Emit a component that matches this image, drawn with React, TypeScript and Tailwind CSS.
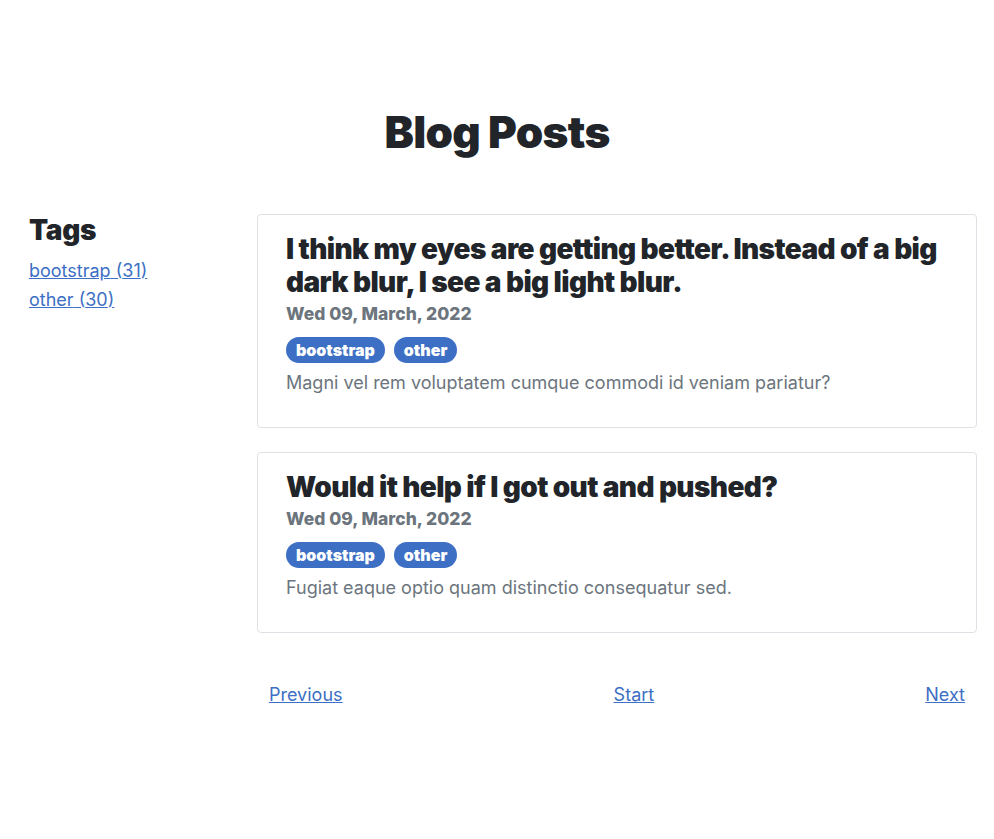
const posts = [
  {
    title: "I think my eyes are getting better. Instead of a big dark blur, I see a big light blur.",
    date: "Wed 09, March, 2022",
    tags: ["bootstrap", "other"],
    excerpt: "Magni vel rem voluptatem cumque commodi id veniam pariatur?",
  },
  {
    title: "Would it help if I got out and pushed?",
    date: "Wed 09, March, 2022",
    tags: ["bootstrap", "other"],
    excerpt: "Fugiat eaque optio quam distinctio consequatur sed.",
  },
];

const tagCounts = [
  { name: "bootstrap", count: 31 },
  { name: "other", count: 30 },
];

function PostCard({ post }: { post: (typeof posts)[number] }) {
  return (
    <div className="rounded-[4px] border border-[#dee2e6] px-7 pt-[18px] pb-[30px]">
      <h2 className="text-[28px] font-black leading-[33px] tracking-[-0.6px] text-[#212529]">
        {post.title}
      </h2>
      <p className="mt-[2px] text-[17.5px] font-extrabold leading-[26px] text-[#6c757d]">{post.date}</p>
      <div className="mt-[10px] flex gap-[9px]">
        {post.tags.map((tag) => (
          <span
            key={tag}
            className="flex h-[26px] items-center rounded-full bg-[#3d6fc4] px-[10px] text-[16px] font-black text-white"
          >
            {tag}
          </span>
        ))}
      </div>
      <p className="mt-[6px] text-[18px] leading-[28px] text-[#6c757d]">{post.excerpt}</p>
    </div>
  );
}

export default function App() {
  return (
    <div className="min-h-screen bg-white font-['Inter',sans-serif] text-[#212529]">
      <h1 className="pt-[104px] text-center text-[44px] font-black leading-[56px] tracking-[-0.7px]">
        Blog Posts
      </h1>

      <div className="mx-auto mt-[54px] flex w-[960px]">
        <aside className="w-[240px] shrink-0 pl-3">
          <h3 className="text-[28px] font-black leading-[32px] tracking-[-0.3px]">Tags</h3>
          <ul className="mt-[10px]">
            {tagCounts.map((t) => (
              <li key={t.name} className="text-[18px] leading-[29px]">
                <a href="#" className="text-[#3d6fc4] underline">
                  {t.name} ({t.count})
                </a>
              </li>
            ))}
          </ul>
        </aside>

        <main className="flex-1">
          <div className="flex flex-col gap-6">
            {posts.map((p) => (
              <PostCard key={p.title} post={p} />
            ))}
          </div>

          <nav className="mt-[48px] flex justify-between px-3 text-[18px] leading-[28px]">
            <a href="#" className="text-[#3d6fc4] underline">
              Previous
            </a>
            <a href="#" className="text-[#3d6fc4] underline">
              Start
            </a>
            <a href="#" className="text-[#3d6fc4] underline">
              Next
            </a>
          </nav>
        </main>
      </div>
    </div>
  );
}
